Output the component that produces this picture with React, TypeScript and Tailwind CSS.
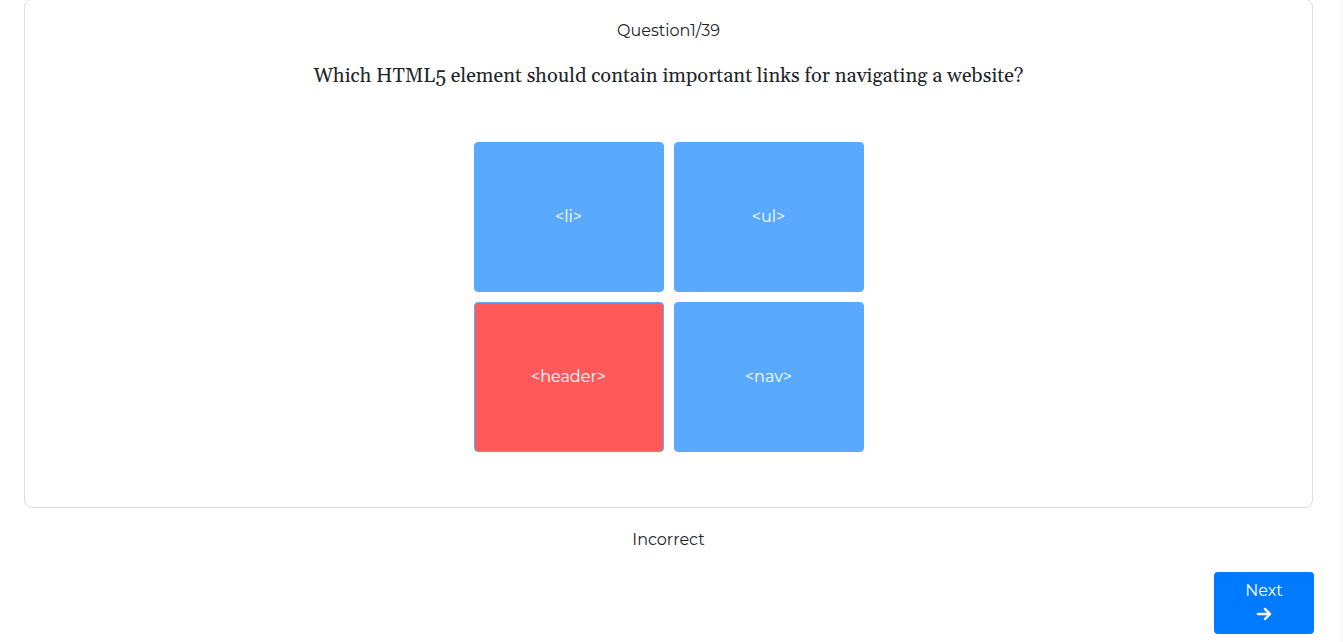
import { FaArrowRight } from "react-icons/fa6";

const question = {
  number: 1,
  total: 39,
  prompt: "Which HTML5 element should contain important links for navigating a website?",
  answers: ["<li>", "<ul>", "<header>", "<nav>"],
  selected: 2,
};

function Answer({ label, wrong }: { label: string; wrong: boolean }) {
  return (
    <button
      type="button"
      aria-pressed={wrong}
      className={`h-[150px] w-[190px] rounded border border-[#59a9ff] text-white ${
        wrong ? "bg-[#ff5959]" : "bg-[#59a9ff]"
      }`}
    >
      {label}
    </button>
  );
}

export default function App() {
  return (
    <div className="min-h-screen border-r-3 border-[#fafafa] bg-white font-['Montserrat','Inter',sans-serif] text-base text-[#212529]">
      <main className="flex flex-col pr-[27px] pl-6">
        <section className="-mt-px flex flex-col items-center rounded-lg border border-[#dcdcdc] px-5 pt-[19px] pb-[55px]">
          <p>
            Question{question.number}/{question.total}
          </p>
          <h1 className="mt-[19px] text-center font-['Gelasio','Georgia','Liberation_Serif',serif] text-[20px] leading-7">
            {question.prompt}
          </h1>
          <div className="mt-[52px] grid grid-cols-2 gap-2.5">
            {question.answers.map((label, i) => (
              <Answer key={label} label={label} wrong={i === question.selected} />
            ))}
          </div>
        </section>
        <p role="status" className="mt-5 text-center">
          Incorrect
        </p>
        <button
          type="button"
          className="mt-5 -mr-px flex w-[100px] flex-col items-center self-end rounded bg-[#007bff] px-3 py-[7px] text-white"
        >
          <span>Next</span>
          <span className="flex h-6 items-start pt-[3px]">
            <FaArrowRight className="size-4" stroke="currentColor" strokeWidth={16} aria-hidden="true" />
          </span>
        </button>
      </main>
    </div>
  );
}
